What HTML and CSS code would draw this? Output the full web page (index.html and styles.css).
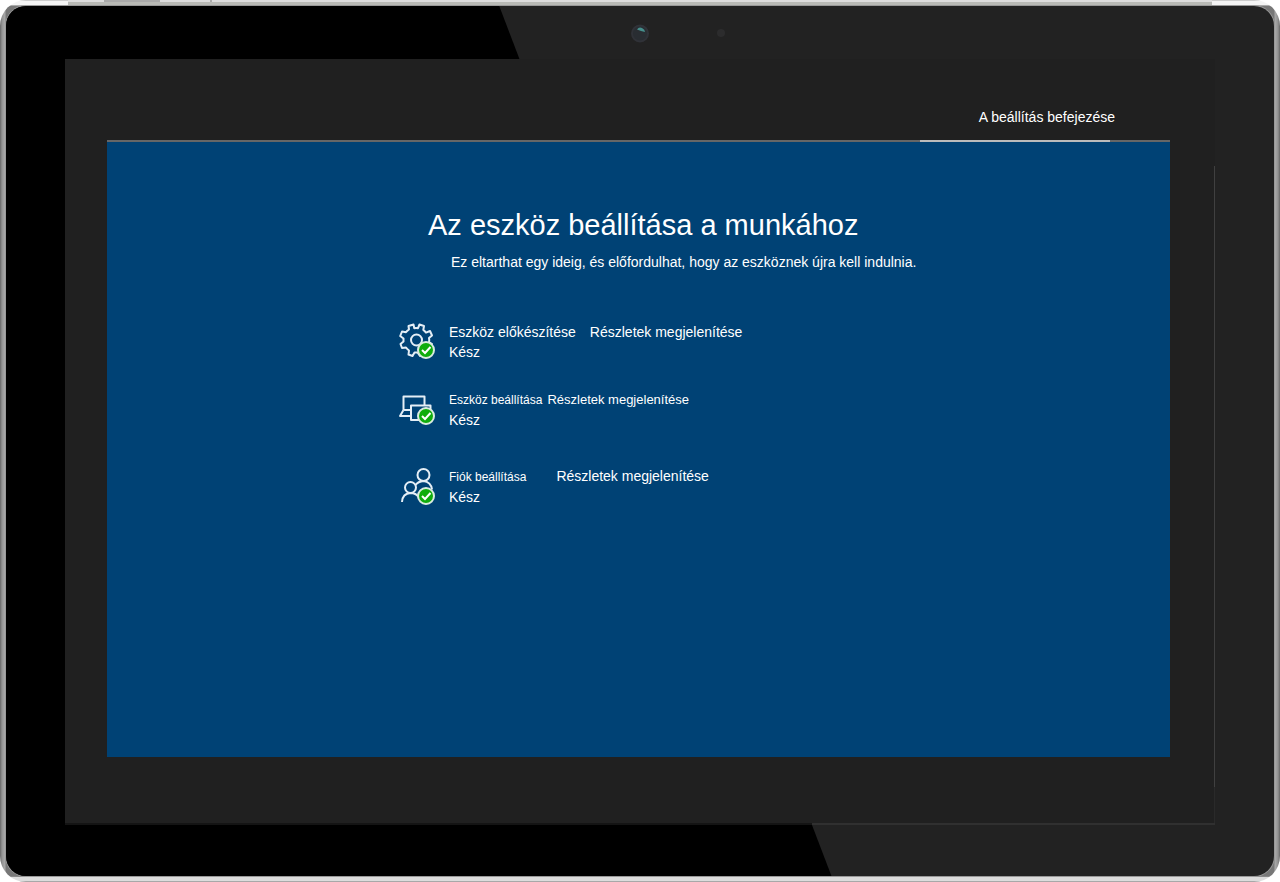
FILE: index.html
```html
<!DOCTYPE html>
<html lang="hu">
<head>
<meta charset="utf-8">
<meta name="viewport" content="width=device-width, initial-scale=1">
<title>Az eszköz beállítása a munkához</title>
<link rel="stylesheet" href="styles.css">
</head>
<body>
<div class="device">
  <div class="edge"></div>
  <div class="bezel">
    <div class="sensors" aria-hidden="true">
      <svg class="camera" viewBox="0 0 20 20"><circle cx="10" cy="10.500" r="8" fill="#292d32" stroke="#303238" stroke-width="2"/><path d="M7 6.500Q9 3.500 12 5Q15 6.500 15 9L11 8Z" fill="#468f8c"/></svg>
      <span class="sensor"></span>
    </div>
    <div class="screen">
      <header class="stage">A beállítás befejezése</header>
      <div class="track"><div class="track-active"></div></div>
      <main class="panel">
        <div class="content">
          <h1 class="title">Az eszköz beállítása a munkához</h1>
          <p class="subtitle">Ez eltarthat egy ideig, és előfordulhat, hogy az eszköznek újra kell indulnia.</p>
          <ul class="steps">
            <li class="step">
              <svg class="icon" viewBox="0 0 38 38" aria-hidden="true">
                <path class="line" d="M15.500 2.500L16.300 6.200Q18 5.800 20 6.200L21.500 2.500L26 4L25.300 8Q27 9.200 28 10.600L32 9L34 13.500L31 16Q31.500 18 31 20L34 22L32 26L28 25.500Q26.800 27 25 28.500L26 32L22 34L19.500 30.500H16.500L14.500 34L10.500 32.500L11 28.500Q9.300 27.200 8 25.500L4 26L2.500 22L5.500 19.500V16.500L2.200 14L4 9.500L8 10.200Q9.200 8.700 11 7.500L10.500 4Z"/>
                <circle class="line" cx="18.500" cy="18" r="5.500"/>
                <circle class="badge" cx="28" cy="28" r="8"/><path class="tick" d="M24 28L27 31L32.500 25"/>
              </svg>
              <div class="step-body">
                <div class="step-row"><span class="step-name step-name-large">Eszköz előkészítése</span><a class="details" href="#">Részletek megjelenítése</a></div>
                <div class="status">Kész</div>
              </div>
            </li>
            <li class="step step-device">
              <svg class="icon" viewBox="0 -1 38 38" aria-hidden="true">
                <path class="line" d="M5.500 19V5.500H26.500V14M5.500 19L2 25H13M6 19H13M13 14.500H32.500V29H13ZM18 29H24"/>
                <circle class="badge" cx="28" cy="25" r="8"/><path class="tick" d="M24 25L27 28L32.500 22"/>
              </svg>
              <div class="step-body">
                <div class="step-row"><span class="step-name">Eszköz beállítása</span><a class="details details-small" href="#">Részletek megjelenítése</a></div>
                <div class="status">Kész</div>
              </div>
            </li>
            <li class="step step-account">
              <svg class="icon" viewBox="0 -1 38 38" aria-hidden="true">
                <circle class="line" cx="25.500" cy="8" r="6"/><circle class="line" cx="12.500" cy="20.500" r="5.500"/>
                <path class="line" d="M4 35Q4.500 26.500 12.500 26Q18 26 20.500 30M17.500 18Q20 14.500 25.500 14Q33 15 34 22.500"/>
                <circle class="badge" cx="28" cy="29" r="8"/><path class="tick" d="M24 29L27 32L32.500 26"/>
              </svg>
              <div class="step-body">
                <div class="step-row"><span class="step-name">Fiók beállítása</span><a class="details" href="#">Részletek megjelenítése</a></div>
                <div class="status">Kész</div>
              </div>
            </li>
          </ul>
        </div>
      </main>
    </div>
  </div>
</div>
</body>
</html>
```
FILE: styles.css
```css
* {
  box-sizing: border-box;
}

body {
  margin: 0;
  background: #fff;
  color: #fff;
  font-family: "Liberation Sans", Arial, sans-serif;
  font-size: 14px;
  line-height: 20px;
}

.device {
  position: relative;
  display: grid;
  min-height: 100vh;
  padding: 6px;
  border-radius: 26px;
  background:
    linear-gradient(#ccc 0 1px, #f4f4f4 1px 5px, #aaa 5px 6px) left top / 68px 6px no-repeat,
    linear-gradient(#ccc 0 1px, #f4f4f4 1px 5px, #aaa 5px 6px) right top / 68px 6px no-repeat,
    linear-gradient(#b9bab6 0 5px, #777 5px 6px, transparent 6px calc(100% - 6px), #888 calc(100% - 6px) calc(100% - 5px), #dcdcdc calc(100% - 5px) calc(100% - 1px), #a8a8a8 calc(100% - 1px)),
    linear-gradient(90deg, #666 0, #929292 2px, #aaa 5px, #777 6px, #777 calc(100% - 6px), #aaa calc(100% - 5px), #929292 calc(100% - 2px), #666 100%);
}

/* Button strip along the top rim */
.edge {
  position: absolute;
  top: 0;
  left: 68px;
  right: 68px;
  height: 2px;
  background: linear-gradient(90deg, #ddd 0 36px, #aaa 36px 92px, #ddd 92px 142px, #aaa 142px 144px, #ddd 144px);
}

.bezel {
  position: relative;
  display: grid;
  padding: 53px 59px 51px;
  border-radius: 20px;
  overflow: hidden;
  background: #222;
  box-shadow: 0 0 0 1px #999;
}

.bezel::before {
  content: "";
  position: absolute;
  inset: 0;
  background: #000;
  clip-path: polygon(0 0, 38.9% 0, 65.1% 100%, 0 100%);
}

.sensors {
  position: absolute;
  top: 17px;
  left: calc(50% - 10px);
  display: flex;
  align-items: center;
  gap: 67px;
}

.camera {
  width: 20px;
  height: 20px;
}

.sensor {
  width: 8px;
  height: 8px;
  border-radius: 50%;
  background: #2c2c2d;
}

/* The lower and right rims catch light only where the glare reaches them */
.screen {
  position: relative;
  display: flex;
  flex-direction: column;
  padding: 48px 45px 68px 42px;
  background:
    linear-gradient(90deg, #141414 65%, #303030 65%) left bottom / 100% 2px no-repeat,
    linear-gradient(transparent 14%, #404040 14% 95%, #2a2a2a 95%) right top / 1px 100% no-repeat,
    #202020;
}

.stage {
  padding: 0 55px 13px 0;
  text-align: right;
}

.track {
  height: 2px;
  padding-right: 60px;
  background: #666;
}

.track-active {
  width: 190px;
  height: 2px;
  margin-left: auto;
  background: #bbb;
}

.panel {
  flex: 1;
  background: #004275;
}

.content {
  margin-left: 27%;
  padding: 65px 0 32px 4px;
}

.title {
  margin: 0 0 9px;
  padding-left: 30px;
  font-size: 29px;
  font-weight: 400;
  line-height: 36px;
}

.subtitle {
  margin: 0;
  padding-left: 53px;
}

.steps {
  display: flex;
  flex-direction: column;
  margin: 0;
  padding: 50px 0 0;
  list-style: none;
}

.step {
  display: flex;
  gap: 13px;
}

.step-device {
  margin-top: 28px;
}

.step-account {
  margin-top: 36px;
}

.icon {
  flex: none;
  width: 38px;
  height: 38px;
  overflow: visible;
}

.line {
  fill: none;
  stroke: #e4eef6;
  stroke-width: 2;
  stroke-linejoin: round;
}

.badge {
  fill: #10ad0c;
  stroke: #d9ecdf;
  stroke-width: 2;
}

.tick {
  fill: none;
  stroke: #fff;
  stroke-width: 2;
}

.step-row {
  display: flex;
  align-items: baseline;
  gap: 14px;
}

.step-name {
  font-size: 12px;
}

.step-name-large {
  font-size: 14px;
}

.step-device .step-row {
  gap: 5px;
}

.step-account .step-row {
  gap: 30px;
}

.details {
  color: inherit;
  text-decoration: none;
}

.details-small {
  font-size: 13px;
}
```
